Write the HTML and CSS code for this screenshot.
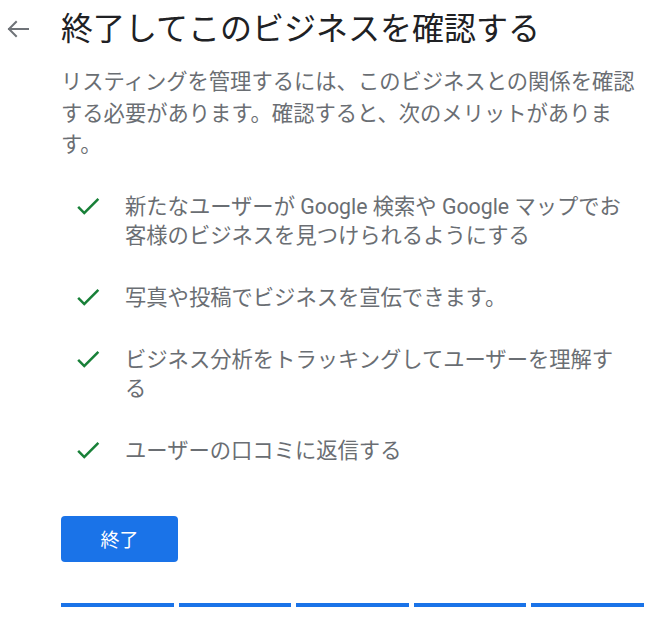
FILE: index.html
```html
<!DOCTYPE html>
<html lang="ja">
<head>
<meta charset="utf-8">
<link rel="stylesheet" href="styles.css">
</head>
<body>
<div class="page">
  <header class="header">
    <div class="back">
      <svg width="24" height="18" viewBox="0 0 24 18" aria-hidden="true">
        <path d="M22 9H3M10 2L3 9l7 7" fill="none" stroke="#6f7378" stroke-width="2" stroke-linecap="square"/>
      </svg>
    </div>
    <h1 class="title">終了してこのビジネスを確認する</h1>
  </header>
  <main class="content">
    <p class="intro">リスティングを管理するには、このビジネスとの関係を確認する必要があります。確認すると、次のメリットがあります。</p>
    <ul class="benefits">
      <li class="benefit">
        <svg class="check" width="30" height="30" viewBox="0 0 24 24" aria-hidden="true"><path d="M9 16.17L4.83 12l-1.42 1.41L9 19 21 7l-1.41-1.41z" fill="#188038"/></svg>
        <span class="text">新たなユーザーが Google 検索や Google マップでお客様のビジネスを見つけられるようにする</span>
      </li>
      <li class="benefit">
        <svg class="check" width="30" height="30" viewBox="0 0 24 24" aria-hidden="true"><path d="M9 16.17L4.83 12l-1.42 1.41L9 19 21 7l-1.41-1.41z" fill="#188038"/></svg>
        <span class="text">写真や投稿でビジネスを宣伝できます。</span>
      </li>
      <li class="benefit">
        <svg class="check" width="30" height="30" viewBox="0 0 24 24" aria-hidden="true"><path d="M9 16.17L4.83 12l-1.42 1.41L9 19 21 7l-1.41-1.41z" fill="#188038"/></svg>
        <span class="text">ビジネス分析をトラッキングしてユーザーを理解する</span>
      </li>
      <li class="benefit">
        <svg class="check" width="30" height="30" viewBox="0 0 24 24" aria-hidden="true"><path d="M9 16.17L4.83 12l-1.42 1.41L9 19 21 7l-1.41-1.41z" fill="#188038"/></svg>
        <span class="text">ユーザーの口コミに返信する</span>
      </li>
    </ul>
    <button class="finish" type="button">終了</button>
    <div class="progress">
      <span class="seg"></span><span class="seg"></span><span class="seg"></span><span class="seg"></span><span class="seg"></span>
    </div>
  </main>
</div>
</body>
</html>
```
FILE: styles.css
```css
* { box-sizing: border-box; }
html, body {
  margin: 0;
  padding: 0;
  background: #ffffff;
}
body {
  font-family: "Noto Sans CJK JP", "Noto Sans", sans-serif;
  width: 656px;
  height: 623px;
  overflow: hidden;
}
.header {
  display: flex;
  align-items: center;
  height: 40px;
  margin-top: 6px;
}
.back {
  width: 61px;
  display: flex;
  align-items: center;
  padding-left: 6px;
  padding-top: 6px;
}
.title {
  margin: 0;
  font-size: 32px;
  font-weight: 400;
  line-height: 40px;
  color: #202124;
  white-space: nowrap;
}
.content {
  margin-left: 61px;
  width: 583px;
}
.intro {
  margin: 18px 0 0;
  font-size: 21.3px;
  line-height: 31.5px;
  color: #6a6e73;
}
.benefits {
  list-style: none;
  margin: 33px 0 0;
  padding: 0;
  display: flex;
  flex-direction: column;
  gap: 33px;
}
.benefit {
  display: flex;
  align-items: flex-start;
}
.check {
  flex: none;
  margin-left: 12px;
  margin-top: -1px;
  margin-right: 22px;
}
.text {
  width: 506px;
  font-family: "Roboto", "Noto Sans CJK JP", sans-serif;
  font-size: 21.3px;
  line-height: 29px;
  color: #6a6e73;
}
.finish {
  margin-top: 51px;
  width: 117px;
  height: 46px;
  border: 0;
  border-radius: 4px;
  background: #1a73e8;
  color: #ffffff;
  font-family: "Noto Sans CJK JP", sans-serif;
  font-size: 19px;
  padding: 0;
  display: block;
}
.progress {
  margin-top: 41px;
  display: flex;
  gap: 5px;
}
.seg {
  flex: 1;
  height: 4px;
  background: #1a73e8;
}
```
